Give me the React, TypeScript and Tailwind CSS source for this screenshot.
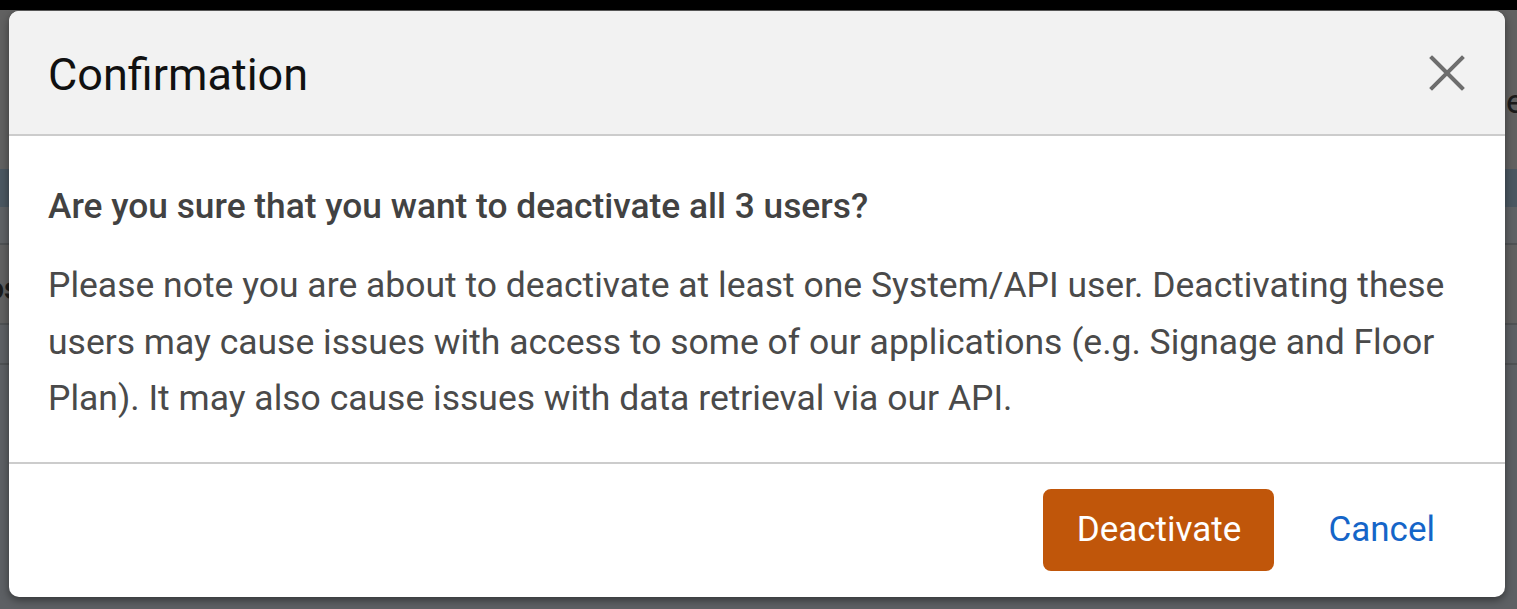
import React from 'react';

const rows = [
  { h: 'h-[159px]', cls: 'bg-[#616161]' },
  { h: 'h-[38px]', cls: 'bg-[#4b5761]' },
  { h: 'h-[38px]', cls: 'bg-[#5f6265] border-b-2 border-[#4f5254]' },
  { h: 'h-[80px]', cls: 'bg-[#616161] border-b-2 border-[#4f5254]' },
  { h: 'h-[40px]', cls: 'bg-[#5d6064] border-b-2 border-[#4f5254]' },
  { h: 'h-[244px]', cls: 'bg-[#5d6064]' },
];

const App = () => {
  return (
    <div className="relative h-[609px] w-[1517px] overflow-hidden bg-[#5e5e5e] font-['Roboto',sans-serif]">
      {/* page behind the overlay */}
      <div className="h-[10px] bg-black" />
      <div className="flex flex-col">
        {rows.map((r, i) => (
          <div key={i} className={`${r.h} ${r.cls} w-full`} />
        ))}
      </div>
      <span className="absolute left-[1506px] top-[76px] text-[34px] text-[#1b1b1b]">e</span>
      <span className="absolute left-[-14px] top-[264px] text-[32px] font-bold text-[#1b1b1b]">os</span>

      {/* dialog */}
      <div className="absolute left-[9px] top-[11px] flex w-[1496px] flex-col overflow-hidden rounded-[10px] bg-white shadow-[0_3px_8px_rgba(0,0,0,0.45)]">
        <div className="flex h-[125px] items-center justify-between border-b-2 border-[#cccccc] bg-[#f2f2f2] pl-[39px] pr-[38px]">
          <h2 className="pt-[3px] text-[45px] font-normal leading-none text-[#111111]">Confirmation</h2>
          <button type="button" className="flex h-[40px] w-[40px] items-center justify-center text-[#6e6e6e]">
            <svg viewBox="0 0 36 36" className="h-[36px] w-[36px]" fill="none" stroke="currentColor" strokeWidth="4" strokeLinecap="square">
              <path d="M3 3L33 33M33 3L3 33" />
            </svg>
          </button>
        </div>

        <div className="border-b-2 border-[#cccccc] px-[39px] pb-[35px] pt-[50px]">
          <p className="text-[35.3px] font-medium leading-[40px] text-[#424242]">
            Are you sure that you want to deactivate all 3 users?
          </p>
          <p className="mt-[31px] text-[35.5px] leading-[56.5px] text-[#4a4a4a]">
            Please note you are about to deactivate at least one System/API user. Deactivating these users may cause
            issues with access to some of our applications (e.g. Signage and Floor Plan). It may also cause issues with
            data retrieval via our API.
          </p>
        </div>

        <div className="flex h-[133px] items-center justify-end gap-[54px] pr-[70px]">
          <button
            type="button"
            className="h-[82px] w-[231px] rounded-[8px] bg-[#c0560a] text-[35px] font-normal text-white"
          >
            Deactivate
          </button>
          <button type="button" className="text-[35px] text-[#1565c8]">
            Cancel
          </button>
        </div>
      </div>
    </div>
  );
};

export default App;
